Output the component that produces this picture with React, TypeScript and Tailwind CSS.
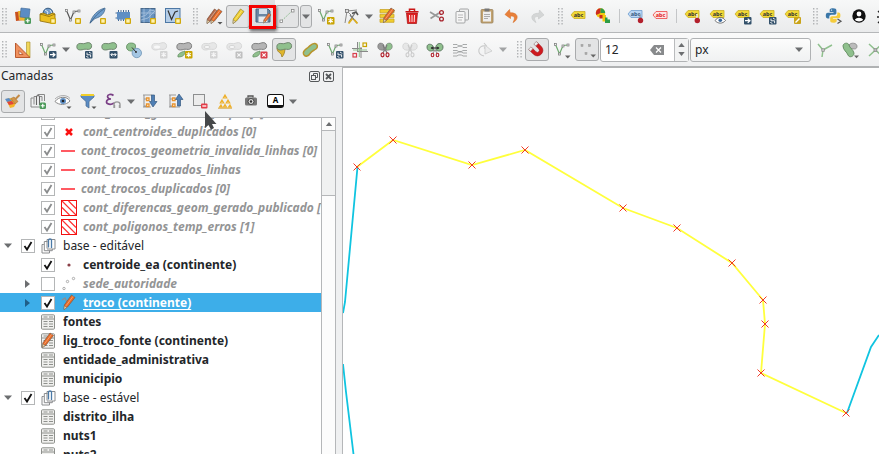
import type { ReactNode } from "react";

/* ---------- drawing helpers ---------- */

function Ic({ children, faded = false }: { children: ReactNode; faded?: boolean }) {
  return (
    <svg
      viewBox="0 0 16 16"
      className={"h-4 w-4 shrink-0 overflow-visible " + (faded ? "opacity-35 grayscale" : "")}
      fill="none"
    >
      {children}
    </svg>
  );
}

const Slot = ({ children, w = "w-[25px]" }: { children?: ReactNode; w?: string }) => (
  <div className={"flex h-full shrink-0 items-center justify-center " + w}>{children}</div>
);

const Pressed = ({ children, w = "w-6" }: { children?: ReactNode; w?: string }) => (
  <div
    className={
      "flex h-[23px] shrink-0 items-center justify-center rounded-[3px] border border-[#a9abad] bg-[#e3e4e5] " + w
    }
  >
    {children}
  </div>
);

const Caret = ({ small = false }: { small?: boolean }) => (
  <svg viewBox="0 0 8 5" className={small ? "h-[3px] w-[5px]" : "h-[5px] w-2"}>
    <path d="M0 .5h8L4 5z" fill="#6c6e70" />
  </svg>
);

const Handle = ({ m }: { m: string }) => (
  <svg viewBox="0 0 5 17" className={"h-[17px] w-[5px] shrink-0 " + m}>
    {[0, 3, 6, 9, 12, 15].map((y) => (
      <path key={y} d={`M0 ${y}h1.4v1.4H0zM3.4 ${y}h1.4v1.4H3.4z`} fill="#b2b4b6" />
    ))}
  </svg>
);

const Sep = ({ m }: { m: string }) => <div className={"h-3.5 w-px shrink-0 bg-[#c4c6c8] " + m} />;

/* small square badges in the lower right corner */
const NewBadge = () => (
  <g>
    <rect x="10" y="10" width="6" height="6" rx="1" fill="#d0a90e" />
    <rect x="11.3" y="11.3" width="3.4" height="3.4" fill="#fff3b0" />
  </g>
);
const StarBadge = ({ c = "#c9a400" }: { c?: string }) => (
  <g>
    <rect x="9" y="9" width="7.5" height="7.5" rx="1" fill={c} />
    <path d="M12.7 10.2v5M10.5 11.4l4.4 2.6M14.9 11.4l-4.4 2.6" stroke="#fff" strokeWidth="1.1" />
  </g>
);
const CrossBadge = () => (
  <g>
    <rect x="9.5" y="9.5" width="7" height="7" rx="1" fill="#d9404c" />
    <path d="M11.3 11.3l3.4 3.4M14.7 11.3l-3.4 3.4" stroke="#fff" strokeWidth="1.2" />
  </g>
);
const ArrowBadge = () => (
  <g>
    <rect x="9" y="9" width="7.5" height="7.5" rx="1" fill="#32506a" />
    <path d="M10 12.7h4M12.7 10.6l2.3 2.1-2.3 2.1" stroke="#fff" strokeWidth="1.2" />
  </g>
);
const TwoWayBadge = () => (
  <g>
    <rect x="8.5" y="9" width="8" height="7.5" rx="1" fill="#32506a" />
    <path d="M10 12.7h5M11.4 11.1l-1.6 1.6 1.6 1.6M13.6 11.1l1.6 1.6-1.6 1.6" stroke="#fff" />
  </g>
);
const RotateBadge = () => (
  <g>
    <rect x="9" y="9" width="7.5" height="7.5" rx="1" fill="#32506a" />
    <path d="M11 10.6v2.2h3.6v2.4M10.4 14a2.3 2.3 0 0 0 2 1.4M15 11.6a2.3 2.3 0 0 0-2-1.4" stroke="#fff" strokeWidth=".9" />
  </g>
);

const VShape = ({ c = "#555" }: { c?: string }) => (
  <g>
    <path d="M1.5 2.5L5.5 12 9 3.5l5-.5" stroke={c} strokeWidth="1.2" />
    <g fill="#f2f2f2" stroke="#777" strokeWidth=".7">
      <rect x=".5" y="1.5" width="2" height="2" />
      <rect x="4.5" y="11" width="2" height="2" />
      <rect x="8" y="3" width="2" height="2" />
      <rect x="13" y="2" width="2" height="2" />
    </g>
  </g>
);

const Blob = ({ fill = "#8fc08d", stroke = "#6a7f69" }: { fill?: string; stroke?: string }) => (
  <path
    d="M.8 4.500C.8 1.800 3.500 1 6 1.600s4-1.100 6.500-1S16 3 15.500 5s-2.500 2.800-5 2.300S7 8 4.500 8 .8 7 .8 4.500z"
    fill={fill}
    stroke={stroke}
    strokeWidth=".9"
  />
);

const Pencil = ({ c = "#ea6a24", d = "#7d5a48" }: { c?: string; d?: string }) => (
  <g>
    <path d="M10.500 1l3.500 2.500L6.500 13 3 15.500 3.300 11z" fill={c} stroke={d} strokeWidth=".7" />
    <path d="M12.200 2.200L5 11.800" stroke="#fff" strokeOpacity=".35" />
    <path d="M3.300 12L3 15.500l2.700-2z" fill="#f3dcb0" stroke="#665" strokeWidth=".4" />
  </g>
);

const Scissors = ({ l = "#9a9a9a", r = "#8fc08d", h = "#b3202c" }: { l?: string; r?: string; h?: string }) => (
  <g>
    <path d="M7 8C2 9 0 6 1 3s5-2 6 0z" fill={l} stroke="#666" strokeWidth=".5" />
    <path d="M9 8c5 1 7-2 6-5S10 1 9 3z" fill={r} stroke="#666" strokeWidth=".5" />
    <path d="M6 3l4 8M10 3l-4 8" stroke="#777" strokeWidth="1.200" />
    <ellipse cx="5.500" cy="12.800" rx="1.500" ry="2" stroke={h} strokeWidth="1.200" />
    <ellipse cx="10.500" cy="12.800" rx="1.500" ry="2" stroke={h} strokeWidth="1.200" />
  </g>
);

const Tag = ({ fill = "#f2d935", stroke = "#c9ae2a", ink = "#333" }: { fill?: string; stroke?: string; ink?: string }) => (
  <g>
    <path d="M1 7l3-3.500h11v7H4z" fill={fill} stroke={stroke} strokeWidth=".8" />
    <text x="3.800" y="8.800" fontSize="5.500" fontWeight="700" fill={ink} fontFamily="Noto Sans, sans-serif">
      abc
    </text>
  </g>
);
const TagSmall = ({ fill = "#f2d935", stroke = "#c9ae2a", ink = "#333" }: { fill?: string; stroke?: string; ink?: string }) => (
  <g transform="translate(-1 -1)">
    <Tag fill={fill} stroke={stroke} ink={ink} />
  </g>
);

/* ---------- toolbars ---------- */

function TopBar() {
  return (
    <div className="flex h-[33px] shrink-0 items-center border-b border-[#b5b7b9] bg-linear-to-b from-[#f7f8f8] to-[#eaebec]">
      <Handle m="ml-[2px] mr-[3px]" />
      <Slot>
        <Ic>
          <path d="M0 4l8-1 1 9-8 1z" fill="#c8501e" />
          <path d="M3 3l8 0 0 10-7-1z" fill="#efb42c" />
          <path d="M6 0l9 1-1 9-9-1z" fill="#5b8cc4" stroke="#3d6796" strokeWidth=".6" />
          <rect x="9.500" y="9.500" width="6.500" height="6.500" rx="1.500" fill="#4c9a5b" />
          <path d="M12.750 10.800v4M10.750 12.750h4" stroke="#fff" strokeWidth="1.200" />
        </Ic>
      </Slot>
      <Slot>
        <Ic>
          <circle cx="8" cy="5" r="4.800" fill="#6f9bc9" stroke="#35597f" />
          <path d="M5 2l3 2-1 3M10 2l2 3" stroke="#dfe9f3" />
          <path d="M0 6l3-1 5 2 5-2 2 1v7l-5 2-10-2z" fill="#ecc022" stroke="#8e6c08" strokeWidth=".8" />
          <path d="M0 6l9 2.500L15 6" stroke="#8e6c08" strokeWidth=".8" />
          <NewBadge />
        </Ic>
      </Slot>
      <Slot><Ic><VShape /><NewBadge /></Ic></Slot>
      <Slot>
        <Ic>
          <path d="M0 15C2 8 7 2 15 0c0 5-4 9-10 10.500z" fill="#6f9fce" stroke="#44698f" strokeWidth=".8" />
          <path d="M0 15.500C4 9 9 4 14 1" stroke="#35597f" strokeWidth=".7" />
          <NewBadge />
        </Ic>
      </Slot>
      <Slot>
        <Ic>
          <path d="M3.500 2v11M6 2v11M8.500 2v11M11 2v11M13.500 2v11" stroke="#456a93" />
          <rect x="2" y="4" width="13" height="7.500" fill="#5f8fc4" />
          <path d="M.5 5h1.500M.5 10h1.500" stroke="#456a93" />
          <NewBadge />
        </Ic>
      </Slot>
      <Slot>
        <Ic>
          <rect x="1" y=".5" width="14" height="14" fill="#6792bf" stroke="#48698c" />
          <path d="M1 9l5-2 4-5 5 1M1 12l7-2 7-7M4 .5v14M10 .5v14M1 5h14" stroke="#a9c3de" strokeWidth=".8" />
          <NewBadge />
        </Ic>
      </Slot>
      <Slot>
        <Ic>
          <rect x=".5" y=".5" width="14.500" height="14" fill="#b4cde7" stroke="#4d78a5" />
          <path d="M3 2.500l3.500 9L10 4l3-1" stroke="#333" strokeWidth="1.200" />
          <NewBadge />
        </Ic>
      </Slot>
      <Handle m="ml-2 mr-1" />
      <Slot w="w-6">
        <Ic>
          <g transform="translate(-2 0)"><Pencil c="#b76a4a" d="#7a4a33" /></g>
          <g transform="translate(2 0)"><Pencil /></g>
          <path d="M11.500 14h5l-2.500 2.500z" fill="#555" />
        </Ic>
      </Slot>
      <Pressed><Ic><Pencil c="#f0cf2e" d="#96822a" /></Ic></Pressed>
      <div className="relative flex h-full w-[25px] shrink-0 items-center justify-center bg-[#dfe0e2]">
        <Ic>
          <path d="M1 1h12l2 2v11H1z" fill="#6b87a3" stroke="#4a6480" />
          <rect x="4" y="1" width="8" height="5" fill="#d6e0ea" />
          <rect x="3.500" y="8.500" width="9" height="5.500" fill="#e8ecef" />
          <g transform="translate(6.500 4.500) scale(.68)"><Pencil /></g>
        </Ic>
        <div className="absolute left-[-1px] top-[5px] h-[24px] w-[27px] border-[3px] border-[#f40000] shadow-[1px_2px_3px_rgba(0,0,0,0.55)]" />
      </div>
      <Pressed>
        <Ic>
          <path d="M3 12.500L13 3" stroke="#7ab37b" strokeDasharray="1.500 1.500" />
          <rect x="1" y="12" width="2.500" height="2.500" fill="#fff" stroke="#888" strokeWidth=".8" />
          <rect x="12.500" y="1.500" width="2.500" height="2.500" fill="#fff" stroke="#888" strokeWidth=".8" />
        </Ic>
      </Pressed>
      <div className="ml-px mr-px flex"><Pressed w="w-3"><Caret /></Pressed></div>
      <Slot><Ic><VShape c="#6faa70" /><StarBadge /></Ic></Slot>
      <Slot>
        <Ic>
          <path d="M2 15L4 3l10-1M4 3l4 4" stroke="#888" strokeWidth="1" />
          <rect x="2.500" y="1.500" width="3" height="3" fill="#ddd" stroke="#666" strokeWidth=".7" />
          <path d="M7 7l7 8M12 5l-6 9" stroke="#777" strokeWidth="1.300" />
          <path d="M9 5.500l4-1.500 2 3" stroke="#555" strokeWidth="1.600" />
          <path d="M5.500 15.500l4-5M11 11.500l3.500 4" stroke="#dfb01c" strokeWidth="1.800" />
        </Ic>
      </Slot>
      <Slot w="w-[11px]"><Caret /></Slot>
      <Slot>
        <Ic>
          <path d="M1 1.500h14v3.300H1zM1 6.300h14v3.300H1zM1 11h14v3.300H1z" fill="#f2cf2b" stroke="#c9a52a" strokeWidth=".8" />
          <g transform="translate(1.500 -1)"><Pencil /></g>
        </Ic>
      </Slot>
      <Slot>
        <Ic>
          <path d="M2.500 5h11l-1 10.500h-9z" fill="#e02222" stroke="#a50f0f" strokeWidth=".7" />
          <path d="M1.500 3.800h13M5.500 3V1.200h5V3" stroke="#c91616" strokeWidth="1.500" />
          <path d="M5.500 7l.3 7M8 7v7M10.500 7l-.3 7" stroke="#fff" strokeWidth=".9" />
        </Ic>
      </Slot>
      <Slot>
        <Ic>
          <path d="M1 4l9 5.500M1.500 10.500L10 5" stroke="#999" strokeWidth="1.700" />
          <circle cx="12.500" cy="4.500" r="1.900" stroke="#a8252e" strokeWidth="1.300" />
          <circle cx="12.500" cy="11" r="1.900" stroke="#a8252e" strokeWidth="1.300" />
        </Ic>
      </Slot>
      <Slot>
        <Ic>
          <rect x="5.500" y="1" width="9" height="11" rx="1" fill="#eee" stroke="#a3a5a6" />
          <rect x="2" y="3.500" width="9" height="11.500" rx="1" fill="#f5f5f5" stroke="#a3a5a6" />
          <path d="M4 7h5M4 9.500h5M4 12h4" stroke="#aaa" strokeWidth=".8" />
        </Ic>
      </Slot>
      <Slot>
        <Ic>
          <rect x="2" y="1.500" width="12" height="13.500" rx="1" fill="#c2a26e" stroke="#9a835d" strokeWidth=".8" />
          <rect x="4" y="3.500" width="8" height="10" fill="#eee" />
          <rect x="5.500" y=".5" width="5" height="3" fill="#777" />
          <path d="M5 6.500h6M5 8.500h6M5 10.500h4" stroke="#999" strokeWidth=".8" />
        </Ic>
      </Slot>
      <Slot>
        <Ic>
          <path d="M5.500 1.500L1 6.500l5.500 4V8.200c4-.8 5 1.800 2.500 6.300 5.500-2.500 6.500-10-3-9.700z" fill="#e8803a" stroke="#d8702c" strokeWidth=".6" />
        </Ic>
      </Slot>
      <Slot>
        <Ic>
          <path d="M10.500 2L15 7l-5.500 4V8.700c-4-.8-5 1.300-2.500 5.800-5.500-2.500-6.500-9.500 3-9.200z" fill="#d4d6d6" stroke="#c8caca" strokeWidth=".6" />
        </Ic>
      </Slot>
      <Handle m="ml-[9px] mr-[2px]" />
      <Slot><Ic><Tag /></Ic></Slot>
      <Slot>
        <Ic>
          <circle cx="5.500" cy="5" r="4.700" fill="#f2c811" />
          <path d="M5.500 5V.3A4.700 4.700 0 0 0 1.300 7z" fill="#cc2a20" />
          <path d="M5.500 5V.3a4.700 4.700 0 0 1 4.700 4.700z" fill="#2e9c46" />
          <path d="M4.500 7h4v3.500h-4z" fill="#cc2a20" />
          <path d="M7.500 7h3.500v6.500H7.500z" fill="#f2c811" />
          <path d="M10 9.500h2.500v2H15V15h-5z" fill="#2e9c46" />
        </Ic>
      </Slot>
      <Sep m="ml-1 mr-[3px]" />
      <Slot>
        <Ic>
          <TagSmall fill="#b9d6f5" stroke="#6f9dce" ink="#35597f" />
          <path d="M12 6v5" stroke="#888" />
          <circle cx="12.500" cy="12.500" r="2.700" fill="#b3202c" />
        </Ic>
      </Slot>
      <Slot w="w-[23px]"><Ic><Tag fill="#fde4e4" stroke="#ee4444" ink="#e02222" /></Ic></Slot>
      <Sep m="ml-[5px] mr-[3px]" />
      <Slot>
        <Ic>
          <TagSmall />
          <path d="M12 6v5" stroke="#eee" strokeWidth="1.500" />
          <circle cx="12.300" cy="12.500" r="2.700" fill="#b3202c" />
        </Ic>
      </Slot>
      <Slot>
        <Ic>
          <TagSmall />
          <path d="M5 12.500c3-4 7.500-4 10.500 0-3 3.500-7.500 3.500-10.500 0z" fill="#fff" stroke="#555" strokeWidth=".8" />
          <circle cx="10.300" cy="12.300" r="1.800" fill="#36669b" />
        </Ic>
      </Slot>
      <Slot><Ic><TagSmall /><ArrowBadge /></Ic></Slot>
      <Slot><Ic><TagSmall /><RotateBadge /></Ic></Slot>
      <Slot>
        <Ic>
          <TagSmall />
          <rect x="9" y="9" width="7" height="7" rx="1" fill="#caa41a" />
          <path d="M10.500 14.500l4-4" stroke="#fff" strokeWidth="1.500" />
        </Ic>
      </Slot>
      <Handle m="ml-2 mr-[3px]" />
      <Slot>
        <Ic>
          <path d="M7 .3c-3 0-3.300 1-3.300 2.200V4h3.800v.8H2C.3 4.800-.2 6-.2 7.800S.5 10.500 2 10.500h1.300V8.800c0-1.200.9-2 2-2h3.400c1 0 1.700-.8 1.700-1.700V2.500C10.400 1 9.500.3 7 .3z" fill="#3b77a8" />
          <path d="M7.400 14.700c3 0 3.300-1 3.300-2.200V11H6.900v-.8h5.500c1.700 0 2-1.200 2-3s-.5-2.700-2-2.700h-1.100v1.700c0 1.200-.9 2-2 2H5.900c-1 0-1.700.8-1.700 1.700v2.600c0 1.500.7 2.200 3.200 2.200z" fill="#f5cc3d" />
          <circle cx="5.500" cy="2.100" r=".7" fill="#fff" />
          <path d="M11.500 11l3.500 2.200-3.500 2.200" stroke="#555" strokeWidth="1.200" />
        </Ic>
      </Slot>
      <Slot>
        <Ic>
          <circle cx="8" cy="8" r="6.700" fill="#111" />
          <circle cx="8" cy="6" r="2.400" fill="#fff" />
          <path d="M3.800 11.800C5.500 9 10.500 9 12.200 11.800 10 14 6 14 3.800 11.800z" fill="#fff" />
        </Ic>
      </Slot>
      <Slot>
        <Ic>
          <ellipse cx="8" cy="9" rx="4" ry="5.500" fill="#222" />
          <path d="M1 9h14M2 3l3 3M2 15l3-3M5 1l2 3" stroke="#222" strokeWidth="1.300" />
        </Ic>
      </Slot>
    </div>
  );
}

function DigitizeBar() {
  return (
    <div className="flex h-[34px] shrink-0 items-center border-b border-[#b0b2b3] bg-linear-to-b from-[#fafafa] to-[#eeeff0]">
      <Handle m="ml-[2px] mr-[3px]" />
      <Slot>
        <Ic>
          <path d="M11.500 0H15v15h-3.500z" fill="#f1d65a" stroke="#a58c24" strokeWidth=".6" />
          <path d="M.5 1v14.500H15z" fill="#f0925f" stroke="#b34f22" strokeWidth=".9" />
          <path d="M4 8.500v4h4z" fill="#f4f4f4" stroke="#b34f22" strokeWidth=".8" />
        </Ic>
      </Slot>
      <Slot><Ic><VShape c="#6faa70" /><ArrowBadge /></Ic></Slot>
      <Slot w="w-[11px]"><Caret /></Slot>
      <Slot><Ic><Blob /><RotateBadge /></Ic></Slot>
      <Slot><Ic><Blob /><TwoWayBadge /></Ic></Slot>
      <Slot>
        <Ic>
          <path d="M.5 5C.5 2 3 .8 5.500 1S10 2 9.500 5 8 9 5.500 9 .5 8 .5 5z" fill="#8fc08d" stroke="#5f8a5e" strokeWidth=".8" />
          <circle cx="10.800" cy="11" r="4.700" fill="#a4c6e3" stroke="#6c93b5" strokeWidth=".8" />
          <path d="M6 5.500l4 4.500" stroke="#333" /><circle cx="10" cy="10" r="1" fill="#333" />
        </Ic>
      </Slot>
      <Slot><Ic faded><Blob fill="#ccc" stroke="#999" /><ellipse cx="6" cy="5" rx="3" ry="1.500" fill="#fff" /><StarBadge c="#999" /></Ic></Slot>
      <Slot>
        <Ic>
          <Blob fill="#b5b5b5" stroke="#777" />
          <path d="M2 15c-1-3 3-5 7-6 0 4-2 6-7 6z" fill="#8fc08d" stroke="#5f8a5e" strokeWidth=".7" />
          <StarBadge />
        </Ic>
      </Slot>
      <Slot><Ic faded><Blob fill="#ccc" stroke="#999" /><ellipse cx="6" cy="5" rx="3" ry="1.500" fill="#fff" stroke="#999" /><StarBadge c="#999" /></Ic></Slot>
      <Slot><Ic faded><Blob fill="#ccc" stroke="#999" /><ellipse cx="6" cy="5" rx="3" ry="1.500" fill="#fff" stroke="#999" /><CrossBadge /></Ic></Slot>
      <Slot>
        <Ic>
          <Blob fill="#b5b5b5" stroke="#777" />
          <path d="M2 15c-1-3 3-5 7-6 0 4-2 6-7 6z" fill="#8fc08d" stroke="#5f8a5e" strokeWidth=".7" />
          <CrossBadge />
        </Ic>
      </Slot>
      <div className="ml-px mr-px flex">
        <Pressed>
          <Ic>
            <path d="M1 6h8c0 4-1 7-3 9-1-1 0-3-2-4s-3-3-3-5z" fill="#e0b62c" stroke="#93761c" strokeWidth=".7" />
            <Blob />
          </Ic>
        </Pressed>
      </div>
      <Slot>
        <Ic>
          <path d="M1.500 12c-1-3 2-4.500 4.500-6.500S10 .8 13 1.500s3 4 1 5.500-4 1.500-5.500 4S3 16 1.500 12z" fill="#8fc08d" stroke="#b8942c" strokeWidth="1.500" />
        </Ic>
      </Slot>
      <Slot><Ic><VShape c="#6faa70" /><RotateBadge /></Ic></Slot>
      <Slot>
        <Ic>
          <path d="M5.500 0v10M9 5v11M0 6.500h10M6 9.500h10" stroke="#888" strokeWidth="1" />
          <path d="M7.300 0v15M1 8h14" stroke="#8fc08d" strokeWidth="1" />
          <rect x="11" y="1" width="3.500" height="3.500" stroke="#c9a400" strokeWidth="1.200" />
          <rect x="1" y="11.500" width="3.500" height="3.500" stroke="#d9404c" strokeWidth="1.200" />
        </Ic>
      </Slot>
      <Slot><Ic><Scissors /></Ic></Slot>
      <Slot><Ic faded><Scissors l="#ccc" r="#ccc" h="#888" /></Ic></Slot>
      <Slot>
        <Ic>
          <path d="M0 5c0-4 5-3 6-1l1 4c-3 2-7 1-7-3zM9 4c2-4 7-3 7 1s-4 5-7 3z" fill="#8fc08d" stroke="#55705a" strokeWidth=".9" />
          <path d="M4 6h8" stroke="#333" strokeWidth="1.200" />
          <path d="M6 4.500L3.500 6 6 7.500zM10 4.500L12.500 6 10 7.500z" fill="#333" />
          <ellipse cx="5.500" cy="13" rx="1.300" ry="1.800" stroke="#b3202c" strokeWidth="1.100" />
          <ellipse cx="10.500" cy="13" rx="1.300" ry="1.800" stroke="#b3202c" strokeWidth="1.100" />
          <path d="M6 11l2-3 2 3" stroke="#888" />
        </Ic>
      </Slot>
      <Slot>
        <Ic>
          <g stroke="#8e9091" strokeWidth="1" opacity=".75">
            <path d="M1 2.500h4c1 2 5 2 6 0h4M1 5.500h4c1-2 5-2 6 0h4M1 8.500h4c1 1.500 5 1.500 6 0h4M1 11h4c1-1.500 5-1.500 6 0h4M1 14h4c1-1.500 5-1.500 6 0h4" />
          </g>
        </Ic>
      </Slot>
      <Slot>
        <Ic faded>
          <path d="M7 14C-1 12 1 3 8 4M7 1l2.500 3L7 6.500" stroke="#777" strokeWidth="1.100" />
          <path d="M8 12V3l7 6z" fill="#ddd" stroke="#888" strokeWidth=".9" />
        </Ic>
      </Slot>
      <Slot w="w-[11px]"><div className="opacity-60"><Caret /></div></Slot>
      <Handle m="ml-[9px] mr-[3px]" />
      <Pressed>
        <Ic>
          <g transform="rotate(-45 8 8)">
            <path d="M2.500 8.500V2H6v6.500a2 2 0 0 0 4 0V2h3.500v6.500c0 7.300-11 7.300-11 0z" fill="#cf1a1f" stroke="#9a1014" strokeWidth=".5" />
            <path d="M2.500 1.500H6v2.700H2.500zM10 1.500h3.500v2.700H10z" fill="#eee" stroke="#888" strokeWidth=".5" />
          </g>
        </Ic>
      </Pressed>
      <Slot w="w-[26px]"><Ic><VShape c="#6faa70" /><path d="M11 13.500h5.500L13.700 16.500z" fill="#666" /></Ic></Slot>
      <Pressed>
        <Ic>
          <g fill="#aaa" stroke="#999" strokeWidth=".5">
            <rect x="2" y="2.500" width="2" height="2" /><rect x="9.500" y="2.500" width="2" height="2" />
            <rect x="6" y="10.500" width="2" height="2" />
          </g>
          <path d="M11.500 12.500H17l-2.700 3z" fill="#666" />
        </Ic>
      </Pressed>
      <div className="ml-px flex h-6 w-[89px] shrink-0 items-center rounded-[3px] border border-[#b0b2b4] bg-white">
        <span className="w-[49px] pl-1 text-[12px] leading-none">12</span>
        <svg viewBox="0 0 14 10" className="h-2.5 w-3.5 shrink-0">
          <path d="M4 0h10v10H4L0 5z" fill="#888a8c" />
          <path d="M6 2.500l5 5M11 2.500l-5 5" stroke="#fff" strokeWidth="1.200" />
        </svg>
        <div className="ml-auto flex h-full w-[14px] flex-col items-center justify-center gap-[5px] border-l border-[#b9bbbd] bg-[#f2f3f3]">
          <svg viewBox="0 0 8 5" className="h-[4px] w-[7px]"><path d="M0 5h8L4 0z" fill="#6c6e70" /></svg>
          <svg viewBox="0 0 8 5" className="h-[4px] w-[7px]"><path d="M0 0h8L4 5z" fill="#6c6e70" /></svg>
        </div>
      </div>
      <div className="ml-px mr-px flex h-6 w-[121px] shrink-0 items-center justify-between rounded-[3px] border border-[#b0b2b4] bg-linear-to-b from-[#fcfcfc] to-[#f0f1f2] pl-1 pr-[7px]">
        <span className="text-[12px] leading-none">px</span>
        <Caret />
      </div>
      <Slot>
        <Ic>
          <path d="M1 2l5 6 9-5M6 8l-1 7" stroke="#8fc08d" strokeWidth="1.500" />
          <rect x="4.800" y="6.800" width="2.500" height="2.500" fill="#ccc" stroke="#888" strokeWidth=".7" />
        </Ic>
      </Slot>
      <Slot>
        <Ic>
          <path d="M7 3c2-3 8-2 8 1s-2 3-3 3l-5-1z" fill="#bbb" stroke="#888" strokeWidth=".8" />
          <path d="M1 4c0-3 5-4 6-1 .5 3 4 4 5 8 0 4-5 5-6 2S1 8 1 4z" fill="#8fc08d" stroke="#5f8a5e" strokeWidth=".9" />
          <path d="M12 13.500h5l-2.500 2.800z" fill="#666" />
        </Ic>
      </Slot>
      <Slot>
        <Ic>
          <path d="M2 2l13 12M15 2L2 14" stroke="#8fc08d" strokeWidth="1.500" />
          <rect x="7" y="6.700" width="2.800" height="2.800" fill="#bbb" stroke="#888" strokeWidth=".7" />
        </Ic>
      </Slot>
    </div>
  );
}

/* ---------- layer tree ---------- */

const GroupIcon = () => (
  <Ic>
    <path d="M8.500 12.500v2.500H1V6.500h1.800" stroke="#8a8c8e" />
    <path d="M6.500 3.500H3.300v9.200h8V11" stroke="#8a8c8e" />
    <path d="M6 10.500V1.500h8v9.500H6" stroke="#8a8c8e" />
    <path d="M7.500 9.500V2.300c0-2 3-2 3 0V10" stroke="#4a7aa8" strokeWidth="1.300" />
  </Ic>
);

const TableIcon = ({ edit = false }: { edit?: boolean }) => (
  <Ic>
    <rect x=".5" y=".8" width="13" height="14.400" rx="1" fill="#f0f0ee" stroke="#8e908c" />
    <path d="M.5 5h13" stroke="#8e908c" />
    <path d="M2.500 3h4M8 3h4M2.500 7.500h4M8 7.500h4M2.500 10h4M8 10h4M2.500 12.500h4M8 12.500h4" stroke="#8e908c" strokeWidth="1" />
    {edit && <g transform="translate(-1.500 -1)"><Pencil /></g>}
  </Ic>
);

const LineIcon = () => <span className="h-0.5 w-3.5 shrink-0 bg-[#ff5a62]" />;

const HatchIcon = () => (
  <Ic>
    <rect x=".5" y=".5" width="15" height="15" fill="#fff" stroke="#f21010" />
    <path d="M1 1l14 14M7.500 1l7.500 7.500M1 7.500L8.500 15" stroke="#f33" strokeWidth="1.200" />
  </Ic>
);

const ErrorIcon = () => (
  <Ic><path d="M5 5l6 6M11 5l-6 6" stroke="#fb1010" strokeWidth="2.500" /></Ic>
);
const DotIcon = () => <Ic><circle cx="8" cy="8" r="1.600" fill="#8a4048" /></Ic>;
const PointsIcon = () => (
  <Ic>
    <g stroke="#999" strokeWidth=".8" fill="#fff">
      <circle cx="3" cy="12.500" r="1.200" /><circle cx="6.500" cy="5.500" r="1.200" /><circle cx="12.500" cy="2.500" r="1.200" />
    </g>
  </Ic>
);
const EditLineIcon = () => (
  <Ic>
    <path d="M1 5l3-2 2 4-2 6" stroke="#8d8f91" strokeWidth="1.400" />
    <g transform="translate(0 -1)"><Pencil /></g>
  </Ic>
);

type Row = {
  text: string;
  icon: ReactNode;
  look: "ghost" | "bold" | "plain" | "active";
  lead: "group" | "child" | "table";
  check?: "on" | "dim" | "off";
  arrow?: "open" | "closed";
};

const rows: Row[] = [
  { text: "cont_trocos_geometria_dupla [0]", icon: <LineIcon />, look: "ghost", lead: "child", check: "dim" },
  { text: "cont_centroides_duplicados [0]", icon: <ErrorIcon />, look: "ghost", lead: "child", check: "dim" },
  { text: "cont_trocos_geometria_invalida_linhas [0]", icon: <LineIcon />, look: "ghost", lead: "child", check: "dim" },
  { text: "cont_trocos_cruzados_linhas", icon: <LineIcon />, look: "ghost", lead: "child", check: "dim" },
  { text: "cont_trocos_duplicados [0]", icon: <LineIcon />, look: "ghost", lead: "child", check: "dim" },
  { text: "cont_diferencas_geom_gerado_publicado [", icon: <HatchIcon />, look: "ghost", lead: "child", check: "dim" },
  { text: "cont_poligonos_temp_erros [1]", icon: <HatchIcon />, look: "ghost", lead: "child", check: "dim" },
  { text: "base - editável", icon: <GroupIcon />, look: "plain", lead: "group", check: "on", arrow: "open" },
  { text: "centroide_ea (continente)", icon: <DotIcon />, look: "bold", lead: "child", check: "on" },
  { text: "sede_autoridade", icon: <PointsIcon />, look: "ghost", lead: "child", check: "off", arrow: "closed" },
  { text: "troco (continente)", icon: <EditLineIcon />, look: "active", lead: "child", check: "on", arrow: "closed" },
  { text: "fontes", icon: <TableIcon />, look: "bold", lead: "table" },
  { text: "lig_troco_fonte (continente)", icon: <TableIcon edit />, look: "bold", lead: "table" },
  { text: "entidade_administrativa", icon: <TableIcon />, look: "bold", lead: "table" },
  { text: "municipio", icon: <TableIcon />, look: "bold", lead: "table" },
  { text: "base - estável", icon: <GroupIcon />, look: "plain", lead: "group", check: "on", arrow: "open" },
  { text: "distrito_ilha", icon: <TableIcon />, look: "bold", lead: "table" },
  { text: "nuts1", icon: <TableIcon />, look: "bold", lead: "table" },
  { text: "nuts2", icon: <TableIcon />, look: "bold", lead: "table" },
];

const leads = { group: "w-[21px] pr-[9px]", child: "w-[41px] pr-[11px]", table: "w-[35px]" };
const looks = {
  ghost: "font-bold italic text-[#939495]",
  bold: "font-bold text-[#232629]",
  plain: "text-[#232629]",
  active: "font-bold text-white underline underline-offset-2",
};

function TreeRow({ row }: { row: Row }) {
  return (
    <div className={"flex h-[19px] shrink-0 items-center " + (row.look === "active" ? "bg-[#3daee9]" : "")}>
      <div className={"flex shrink-0 justify-end " + leads[row.lead]}>
        {row.arrow === "open" && <Caret />}
        {row.arrow === "closed" && (
          <svg viewBox="0 0 5 8" className="h-2 w-[5px]">
            <path d="M0 0v8l5-4z" fill={row.look === "active" ? "#1f5f88" : "#6c6e70"} />
          </svg>
        )}
      </div>
      {row.check && (
        <div className="h-3.5 w-3.5 shrink-0 border border-[#b4b6b7] bg-white">
          {row.check !== "off" && (
            <svg viewBox="0 0 12 12" className="h-3 w-3" fill="none">
              <path d="M2.500 6L5 9.500 9.500 2" stroke={row.check === "on" ? "#111" : "#8a8c8d"} strokeWidth="1.800" />
            </svg>
          )}
        </div>
      )}
      <div className="ml-1.5 flex shrink-0 items-center">{row.icon}</div>
      <span className={"ml-1.5 whitespace-nowrap text-[12px] leading-[19px] " + looks[row.look]}>{row.text}</span>
    </div>
  );
}

function PanelTools() {
  return (
    <div className="flex h-[32px] shrink-0 items-center">
      <div className="ml-px"><Pressed>
        <Ic>
          <path d="M1 6l5-1 5 5-2 4-4 1z" fill="#f5b52c" />
          <path d="M0 6l4-1 3 3-5 1z" fill="#5b8cc4" />
          <path d="M2 9l5-1 2 3-5 1z" fill="#e2453a" />
          <path d="M6 5.500l3-1.500 4 4.500-3 2.500z" fill="#d3974c" stroke="#a8742c" strokeWidth=".6" />
          <path d="M10 6.500L14.500 2" stroke="#c48a44" strokeWidth="2" />
        </Ic>
      </Pressed></div>
      <Slot>
        <Ic>
          <path d="M9.500 14H1V5h2.500M4 11.500V3.500h3" stroke="#888" />
          <path d="M12 8V3.500H9.500M14.500 8V1.500h-7" stroke="#888" />
          <path d="M6.500 12V4c0-2 3-2 3 0v8" stroke="#666" strokeWidth="1.100" />
          <rect x="9.500" y="9.500" width="6.500" height="6.500" rx="1.500" fill="#4c9a5b" />
          <path d="M12.750 10.800v4M10.750 12.750h4" stroke="#fff" strokeWidth="1.200" />
        </Ic>
      </Slot>
      <Slot>
        <Ic>
          <path d="M0 8.500C4 3 12 3 15 8c-4 4.500-11 4.500-15 .5z" fill="#fff" stroke="#888" />
          <path d="M0 6C4 1.500 12 1.500 15 5.500" stroke="#999" strokeWidth=".8" />
          <circle cx="8" cy="8" r="3" fill="#5f8fc4" /><circle cx="8" cy="8" r="1.300" fill="#222" />
          <path d="M11.500 13.500h5L14 16z" fill="#555" />
        </Ic>
      </Slot>
      <Slot>
        <Ic>
          <path d="M1 2h13v2L9 8.500V15l-3-2V8.500L1 4z" fill="#5b8cc4" stroke="#44698f" strokeWidth=".7" />
          <path d="M1 1h13v2H1z" fill="#f2cf2b" />
          <path d="M11.500 13.500h5L14 16z" fill="#555" />
        </Ic>
      </Slot>
      <Slot>
        <Ic>
          <path d="M8.500 2.500C6 .5 2.500 1.500 2.500 3.500S4.500 6 6 6C3 6 1.500 7 1.500 9s4 3.500 7.500 1" stroke="#7a3f86" strokeWidth="1.700" />
          <path d="M9 15v-3.500c0-3.500 6-3.500 6 0V15M9.500 12v3M14.500 12v3" stroke="#999" strokeWidth="1.400" />
        </Ic>
      </Slot>
      <Slot w="w-[11px]"><Caret /></Slot>
      <Slot w="w-[27px]">
        <Ic>
          <path d="M1 2h9M2 2v12M2 6h3M2 13h3M1 14h8" stroke="#999" strokeWidth="1.100" />
          <path d="M4.500 5h2.500v2.500H4.500zM4.500 11h2.500v2.500H4.500z" fill="#fff" stroke="#e8922c" strokeWidth="1.300" />
          <path d="M9.500 2h3v6.500H15L11 14 7.500 8.500h2z" fill="#4f7fb5" stroke="#35597f" strokeWidth=".7" />
        </Ic>
      </Slot>
      <Slot>
        <Ic>
          <path d="M1 2h7M2 2v12M2 6h3M2 13h3M1 14h11" stroke="#999" strokeWidth="1.100" />
          <path d="M4.500 5h2.500v2.500H4.500zM4.500 11h2.500v2.500H4.500z" fill="#fff" stroke="#e8922c" strokeWidth="1.300" />
          <path d="M9.500 13h3V6.500H15L11 1 7.500 6.500h2z" fill="#4f7fb5" stroke="#35597f" strokeWidth=".7" />
        </Ic>
      </Slot>
      <Slot>
        <Ic>
          <rect x=".5" y="1.500" width="11" height="11" fill="#ececec" stroke="#8d8f90" />
          <rect x="8" y="10.500" width="6.500" height="5" rx="1" fill="#e33c48" />
          <path d="M9.300 13h4" stroke="#fff" strokeWidth="1.300" />
        </Ic>
      </Slot>
      <Slot>
        <Ic>
          <g fill="none" stroke="#eeb02a" strokeWidth="1.200">
            <path d="M7 2l1.700 3H5.300zM4 7l1.700 3H2.300zM10 7l1.700 3H8.300z" />
            <path d="M3 12l1.200 2.200H1.500zM12 12l1.200 2.200h-2.700zM7 11.500l1.500 2.700H5.500z" />
          </g>
          <path d="M0 15.300h14" stroke="#d9a436" strokeWidth=".8" />
        </Ic>
      </Slot>
      <Slot>
        <Ic>
          <rect x="2" y="4.500" width="12" height="8" rx="1.500" fill="#777" />
          <path d="M5 4.500V3h5v1.500" stroke="#555" strokeWidth="1.300" />
          <circle cx="8" cy="8.500" r="3" fill="#ddd" stroke="#444" /><circle cx="8" cy="8.500" r="1.200" fill="#333" />
        </Ic>
      </Slot>
      <div className="ml-1 flex h-3.5 w-[17px] shrink-0 items-center justify-center rounded-[3px] border border-b-[3px] border-[#111] bg-white text-[8px] leading-none font-bold text-black">
        A
      </div>
      <Slot w="w-[17px]"><Caret /></Slot>
    </div>
  );
}

function LayersPanel() {
  return (
    <div className="relative flex w-[343px] shrink-0 flex-col border-r border-[#b5b7b9] bg-[#eff0f1]">
      <div className="flex h-[18px] shrink-0 items-center pl-px pr-2">
        <span className="text-[12px] leading-none">Camadas</span>
        <svg viewBox="0 0 25 11" className="ml-auto h-[11px] w-[25px]" fill="none" stroke="#55585a">
          <rect x=".5" y=".5" width="10" height="10" rx="1.500" />
          <rect x="2.500" y="4.500" width="4" height="4" /><path d="M4.500 4.500v-2h4v4h-2" />
          <rect x="14.500" y=".5" width="10" height="10" rx="1.500" />
          <path d="M17 3l5 5M22 3l-5 5" strokeWidth="1.800" />
        </svg>
      </div>
      <PanelTools />
      <div className="flex min-h-0 w-[336px] flex-1 border-t border-r border-[#b5b7b9] bg-white">
        <div className="flex min-w-0 flex-1 flex-col overflow-hidden">
          <div className="-mt-[15px] flex flex-col">
            {rows.map((r) => <TreeRow key={r.text} row={r} />)}
          </div>
        </div>
        <div className="flex w-[14px] shrink-0 flex-col border-l border-[#b5b7b9] bg-[#fcfcfc]">
          <div className="flex h-[13px] items-center justify-center border-b border-[#b5b7b9]">
            <svg viewBox="0 0 8 5" className="h-1 w-2"><path d="M0 5h8L4 0z" fill="#6c6e70" /></svg>
          </div>
          <div className="h-[65px] border-b border-[#b5b7b9] bg-[#f0f1f1]" />
        </div>
      </div>
      <svg viewBox="0 0 12 20" className="absolute left-[205px] top-[44px] h-5 w-3">
        <path d="M0 0v17l3.500-3L6 18.700l3-1.700-2-4h4.500z" fill="#46484a" />
      </svg>
    </div>
  );
}

/* ---------- map ---------- */

const vertices = [
  [357, 167], [393, 140], [472, 165], [525, 150], [623, 208], [677, 228],
  [732, 263], [763, 300], [765, 324], [761, 373], [846, 413],
];

function MapCanvas() {
  return (
    <div className="min-w-0 flex-1 border-t border-[#b0b2b3] bg-white">
      <svg viewBox="343 68 536 386" className="block h-[386px] w-[536px]" fill="none">
        <path d="M357.500 167L345 302l-2 11M343 364l3 28 7.500 62M847 413l24-66 8-12" stroke="#10c4e0" strokeWidth="1.800" />
        <polyline points={vertices.map((v) => v.join(",")).join(" ")} stroke="#ffff3c" strokeWidth="1.800" />
        {vertices.map(([x, y]) => (
          <path key={x} d={`M${x - 3.5} ${y - 3.5}l7 7M${x + 3.5} ${y - 3.5}l-7 7`} stroke="#f03a28" strokeWidth="1" />
        ))}
      </svg>
    </div>
  );
}

export default function App() {
  return (
    <div className="flex h-[454px] w-[879px] flex-col overflow-hidden bg-[#eff0f1] font-['Noto_Sans',sans-serif] text-[#232629]">
      <TopBar />
      <DigitizeBar />
      <div className="flex min-h-0 flex-1">
        <LayersPanel />
        <MapCanvas />
      </div>
    </div>
  );
}
